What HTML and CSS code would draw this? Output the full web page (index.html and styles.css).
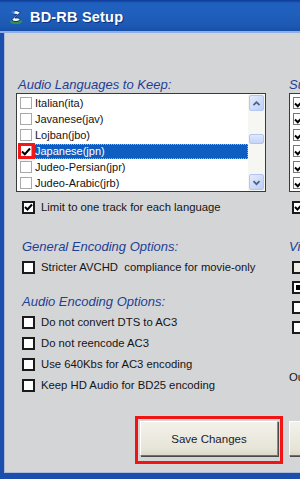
FILE: index.html
```
<!DOCTYPE html>
<html lang="en">

<head>
    <meta charset="UTF-8">
    <meta name="viewport" content="width=device-width, initial-scale=1.0">
    <title>BD-RB Setup</title>
    <link rel="stylesheet" href="styles.css">
</head>

<body>
    <div class="window">
        <div class="titlebar">
            <svg class="app-icon" width="14" height="16" viewBox="0 0 14 16">
                <ellipse cx="7" cy="12.5" rx="6" ry="2.8" fill="#2f8f5a" />
                <path d="M2.5 3 Q7 0 11.5 3 L6 9 Q9.5 8 11.5 10.5 Q7 14.5 2.5 11 L8 5.5 Q4.5 6 2.5 3Z" fill="#f4f8ff"
                    stroke="#0b2f7a" stroke-width="1" />
                <circle cx="4" cy="3" r="1.6" fill="#3c7de0" />
            </svg>
            <span class="title">BD-RB Setup</span>
        </div>
        <div class="frame">
            <div class="client">
                <div class="columns">
                    <div class="col col-left">
                        <div class="group-label first">Audio Languages to Keep:</div>
                        <div class="listbox">
                            <ul class="items">
                                <li class="item"><span class="lbox"></span><span class="ltext">Italian(ita)</span></li>
                                <li class="item"><span class="lbox"></span><span class="ltext">Javanese(jav)</span></li>
                                <li class="item"><span class="lbox"></span><span class="ltext">Lojban(jbo)</span></li>
                                <li class="item selected">
                                    <span class="lbox marked">
                                        <svg width="10" height="9" viewBox="0 0 10 9">
                                            <path d="M1 4.5 L3.8 7.2 L9 1.5" fill="none" stroke="#000" stroke-width="2" />
                                        </svg>
                                    </span>
                                    <span class="ltext">Japanese(jpn)</span>
                                </li>
                                <li class="item"><span class="lbox"></span><span class="ltext">Judeo-Persian(jpr)</span></li>
                                <li class="item"><span class="lbox"></span><span class="ltext">Judeo-Arabic(jrb)</span></li>
                            </ul>
                            <div class="scrollbar">
                                <div class="sb-btn">
                                    <svg width="15" height="15" viewBox="0 0 15 15">
                                        <path d="M4 9.5 L7.5 6 L11 9.5" fill="none" stroke="#4d6185" stroke-width="2" />
                                    </svg>
                                </div>
                                <div class="sb-track"><div class="sb-thumb"></div></div>
                                <div class="sb-btn">
                                    <svg width="15" height="15" viewBox="0 0 15 15">
                                        <path d="M4 6 L7.5 9.5 L11 6" fill="none" stroke="#4d6185" stroke-width="2" />
                                    </svg>
                                </div>
                            </div>
                        </div>

                        <div class="option limit">
                            <span class="cbox">
                                <svg width="9" height="9" viewBox="0 0 9 9">
                                    <path d="M1 4 L3.5 6.5 L8 1.5" fill="none" stroke="#000" stroke-width="2" />
                                </svg>
                            </span>
                            <span>Limit to one track for each language</span>
                        </div>

                        <div class="group-label section">General Encoding Options:</div>
                        <div class="option"><span class="cbox"></span><span>Stricter AVCHD&nbsp; compliance for movie-only</span></div>

                        <div class="group-label section audio">Audio Encoding Options:</div>
                        <div class="option"><span class="cbox"></span><span>Do not convert DTS to AC3</span></div>
                        <div class="option next"><span class="cbox"></span><span>Do not reencode AC3</span></div>
                        <div class="option next"><span class="cbox"></span><span>Use 640Kbs for AC3 encoding</span></div>
                        <div class="option next"><span class="cbox"></span><span>Keep HD Audio for BD25 encoding</span></div>
                    </div>

                    <div class="col col-right">
                        <div class="group-label first edge">Subtitle Languages to Keep:</div>
                        <div class="listbox side">
                            <ul class="items">
                                <li class="item"><span class="lbox dark"><svg width="10" height="9" viewBox="0 0 10 9"><path d="M1 4.5 L3.8 7.2 L9 1.5" fill="none" stroke="#000" stroke-width="2" /></svg></span><span class="ltext">Chinese(chi)</span></li>
                                <li class="item"><span class="lbox dark"><svg width="10" height="9" viewBox="0 0 10 9"><path d="M1 4.5 L3.8 7.2 L9 1.5" fill="none" stroke="#000" stroke-width="2" /></svg></span><span class="ltext">Danish(dan)</span></li>
                                <li class="item"><span class="lbox dark"><svg width="10" height="9" viewBox="0 0 10 9"><path d="M1 4.5 L3.8 7.2 L9 1.5" fill="none" stroke="#000" stroke-width="2" /></svg></span><span class="ltext">Dutch(dut)</span></li>
                                <li class="item"><span class="lbox dark"><svg width="10" height="9" viewBox="0 0 10 9"><path d="M1 4.5 L3.8 7.2 L9 1.5" fill="none" stroke="#000" stroke-width="2" /></svg></span><span class="ltext">English(eng)</span></li>
                                <li class="item"><span class="lbox dark"><svg width="10" height="9" viewBox="0 0 10 9"><path d="M1 4.5 L3.8 7.2 L9 1.5" fill="none" stroke="#000" stroke-width="2" /></svg></span><span class="ltext">Finnish(fin)</span></li>
                                <li class="item"><span class="lbox dark"><svg width="10" height="9" viewBox="0 0 10 9"><path d="M1 4.5 L3.8 7.2 L9 1.5" fill="none" stroke="#000" stroke-width="2" /></svg></span><span class="ltext">French(fre)</span></li>
                            </ul>
                        </div>
                        <div class="option limit side-opt">
                            <span class="cbox"><svg width="9" height="9" viewBox="0 0 9 9"><path d="M1 4 L3.5 6.5 L8 1.5" fill="none" stroke="#000" stroke-width="2" /></svg></span>
                            <span>Limit to one track</span>
                        </div>
                        <div class="group-label section edge">Video Options:</div>
                        <div class="option side-opt"><span class="cbox cream"></span><span>Option</span></div>
                        <div class="option side-opt tight"><span class="cbox"><svg width="9" height="9" viewBox="0 0 9 9"><rect x="2" y="2" width="5" height="5" fill="#000" /></svg></span><span>Option</span></div>
                        <div class="option side-opt tight"><span class="cbox"></span><span>Option</span></div>
                        <div class="option side-opt tight"><span class="cbox"></span><span>Option</span></div>
                        <div class="side-text">Output</div>
                    </div>
                </div>

                <div class="buttons">
                    <span class="highlight"><button class="btn">Save Changes</button></span>
                    <button class="btn other">Cancel</button>
                </div>
            </div>
        </div>
    </div>
</body>

</html>
```

FILE: styles.css
```
:root {
    --label: #1e3f94;
    --face: #d4d5d7;
}

body,
html {
    margin: 0;
    padding: 0;
    background: var(--face);
}

.window {
    width: 300px;
    height: 479px;
    overflow: hidden;
    font-family: 'Liberation Sans', Arial, sans-serif;
    color: #141414;
}

.titlebar {
    height: 31px;
    display: flex;
    align-items: center;
    padding: 2px 0 0 9px;
    box-sizing: border-box;
    background: linear-gradient(#0c3a96 0, #1f5fbe 3px, #2060bd 40%, #1c58b3 85%, #184fa6 100%);
    border-bottom: 2px solid #8eaee4;
    height: 33px;
}

.app-icon {
    flex: none;
    margin-top: 1px;
}

.title {
    margin-left: 7px;
    color: #fff;
    font-weight: bold;
    font-size: 14.5px;
    letter-spacing: 0.2px;
    text-shadow: 1px 1px 0 #0b3280;
}

.frame {
    background: #1c4fad;
    padding: 0 0 6px 4px;
}

.client {
    height: 440px;
    box-sizing: border-box;
    background: var(--face);
    border-left: 1px solid #a9b9d9;
    border-bottom: 1px solid #aebcd8;
    padding: 44px 0 0 11px;
    width: 400px;
}

.columns {
    display: flex;
    gap: 23px;
}

.col-left {
    width: 250px;
    flex: none;
}

.col-right {
    width: 120px;
    flex: none;
}

.group-label {
    font-size: 13px;
    line-height: 16px;
    font-style: italic;
    color: var(--label);
    white-space: nowrap;
    margin-left: 6px;
}

.group-label.first {
    margin-left: 2px;
}

.group-label.edge {
    margin-left: 0;
}

.group-label.section {
    margin-top: 24px;
}

.group-label.audio {
    margin-top: 19px;
}

.listbox {
    display: flex;
    width: 250px;
    height: 99px;
    box-sizing: border-box;
    border: 1px solid #3a3a3a;
    background: #fff;
}

.items {
    list-style: none;
    margin: 0;
    padding: 1px 0 0 0;
    flex: 1;
}

.item {
    display: flex;
    align-items: center;
    height: 16px;
    font-size: 11px;
    white-space: nowrap;
}

.lbox {
    flex: none;
    width: 12px;
    height: 12px;
    box-sizing: border-box;
    margin: 0 1px 0 3px;
    border: 1px solid #a9a9a9;
    background: #fff;
    display: flex;
    align-items: center;
    justify-content: center;
    position: relative;
}

.lbox.dark {
    border-color: #777;
}

.lbox.marked::after {
    content: "";
    position: absolute;
    left: -3px;
    top: -3px;
    width: 17px;
    height: 16px;
    box-sizing: border-box;
    border: 3px solid #f01818;
}

.ltext {
    flex: 1;
    padding-left: 2px;
    line-height: 15px;
}

.item.selected .ltext {
    background: #0d5ec0;
    color: #fff;
    outline: 1px dotted #e8a93a;
    outline-offset: -1px;
}

.scrollbar {
    width: 17px;
    flex: none;
    display: flex;
    flex-direction: column;
    background: #f6f6f2;
}

.sb-btn {
    height: 16px;
    box-sizing: border-box;
    margin: 1px 1px 0 1px;
    border: 1px solid #b4c6f0;
    border-radius: 2px;
    background: linear-gradient(135deg, #e4ecfd, #bccff6);
    display: flex;
    align-items: center;
    justify-content: center;
}

.sb-btn:last-child {
    margin: 0 1px 1px 1px;
}

.sb-track {
    flex: 1;
}

.sb-thumb {
    margin: 23px 1px 0 1px;
    height: 8px;
    border: 1px solid #b4c6f0;
    border-radius: 2px;
    background: linear-gradient(#dfe8fd, #c4d5f8);
}

.listbox.side {
    width: 120px;
}

.option {
    display: flex;
    align-items: center;
    height: 16px;
    margin-top: 4px;
    padding-left: 6px;
    font-size: 11.3px;
    white-space: nowrap;
}

.option.limit {
    margin-top: 7px;
}

.option.next {
    margin-top: 5px;
}

.option.tight {
    margin-top: 4px;
}

.option.side-opt {
    padding-left: 3px;
}

.cbox {
    flex: none;
    width: 13px;
    height: 13px;
    box-sizing: border-box;
    border: 2px solid #1b1b1b;
    background: #fff;
    margin-right: 6px;
    display: flex;
    align-items: center;
    justify-content: center;
}

.cbox.cream {
    background: #efeee2;
}

.side-text {
    margin-top: 34px;
    font-size: 11.3px;
    line-height: 16px;
}

.buttons {
    display: flex;
    align-items: flex-start;
    margin-top: 23px;
    padding-left: 119px;
    gap: 6px;
}

.highlight {
    display: block;
    border: 3px solid #f01414;
    padding: 2px 2px 5px 2px;
}

.btn {
    display: block;
    width: 138px;
    height: 35px;
    margin: 0;
    padding: 0;
    font-family: 'Liberation Sans', Arial, sans-serif;
    font-size: 11.5px;
    color: #1a1a2a;
    background: linear-gradient(#f3f2ea, #e7e5d8 80%, #dcd9c9);
    border: 1px solid;
    border-color: #ffffff #8a8a84 #707069 #ffffff;
    box-shadow: 1px 1px 0 #4a4a4a;
}

.btn.other {
    margin-top: 5px;
}
```
